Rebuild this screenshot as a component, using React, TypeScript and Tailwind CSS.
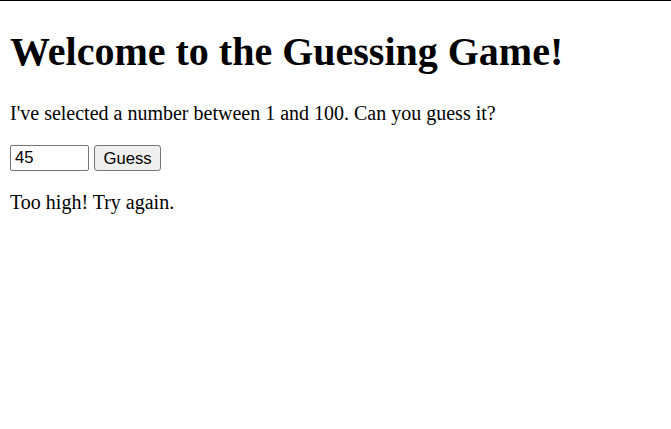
import React from "react";

export default function App() {
  return (
    <div className="border-t border-black min-h-[428px] bg-white px-[10px]" style={{ fontFamily: '"Liberation Serif", serif' }}>
      <h1 className="text-[40px] font-bold pt-[28px] mb-[27px] leading-[46px] text-black">Welcome to the Guessing Game!</h1>
      <p className="text-[20px] leading-[23px] text-black">I've selected a number between 1 and 100. Can you guess it?</p>
      <div className="flex items-center gap-[5px] mt-[20px]" style={{ fontFamily: '"Liberation Sans", sans-serif' }}>
        <input
          type="number"
          defaultValue={45}
          className="w-[79px] h-[26px] border border-[#767676] rounded-[2px] px-[4px] text-[16.67px] text-black"
        />
        <button className="h-[26px] w-[67px] border border-[#767676] rounded-[3px] bg-[#efefef] text-[16.67px] text-black">Guess</button>
      </div>
      <p className="text-[20px] leading-[23px] mt-[20px] text-black">Too high! Try again.</p>
    </div>
  );
}
